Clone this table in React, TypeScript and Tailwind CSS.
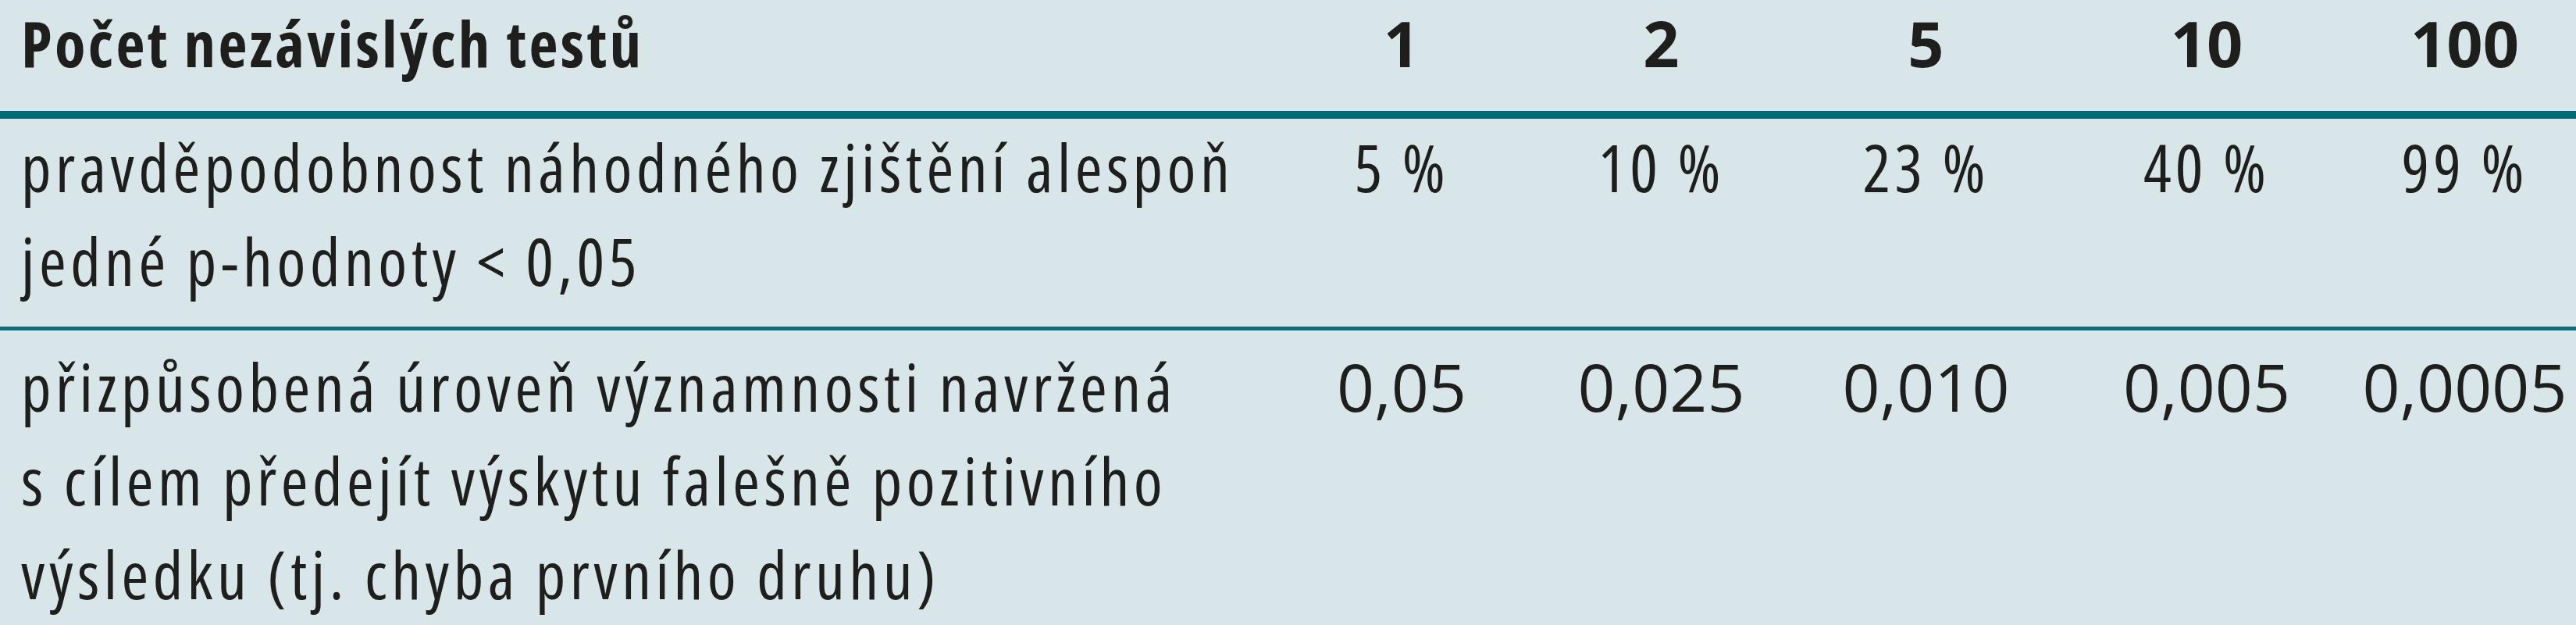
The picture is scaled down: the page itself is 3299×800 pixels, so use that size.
import React from "react";

const cols = "grid grid-cols-[1630px_330px_335px_343px_376px_285px]";

const headers = ["1", "2", "5", "10", "100"];
const chance = ["5 %", "10 %", "23 %", "40 %", "99 %"];
const levels = ["0,05", "0,025", "0,010", "0,005", "0,0005"];

export default function App() {
  return (
    <div className="w-[3299px] h-[800px] overflow-hidden bg-[#d9e6e9] text-[#1e1e1c] font-['Open_Sans',sans-serif]">
      {/* header */}
      <div className={`${cols} h-[152px] border-b-[10px] border-[#006b73]`}>
        <div className="pl-[27px] text-[81px] font-bold leading-[110px] tracking-[3.3px] whitespace-nowrap [font-stretch:75%]">
          Počet nezávislých testů
        </div>
        {headers.map((h) => (
          <div
            key={h}
            className="text-center text-[81px] font-bold leading-[110px]"
          >
            {h}
          </div>
        ))}
      </div>

      {/* probability row */}
      <div className={`${cols} pt-[2px] pb-[24px] border-b-[5px] border-[#136c75]`}>
        <div className="pl-[27px] text-[84px] leading-[120px] tracking-[5.5px] whitespace-nowrap [font-stretch:75%]">
          pravděpodobnost náhodného zjištění alespoň
          <br />
          jedné p-hodnoty &lt; 0,05
        </div>
        {chance.map((c) => (
          <div
            key={c}
            className="text-center text-[84px] leading-[120px] tracking-[5px] whitespace-nowrap [font-stretch:75%]"
          >
            {c}
          </div>
        ))}
      </div>

      {/* adjusted significance row */}
      <div className={`${cols} pt-[12px]`}>
        <div className="pl-[27px] text-[84px] leading-[120px] tracking-[5.5px] whitespace-nowrap [font-stretch:75%]">
          přizpůsobená úroveň významnosti navržená
          <br />
          s cílem předejít výskytu falešně pozitivního
          <br />
          výsledku (tj. chyba prvního druhu)
        </div>
        {levels.map((l) => (
          <div
            key={l}
            className="text-center text-[84px] leading-[120px] whitespace-nowrap"
          >
            {l}
          </div>
        ))}
      </div>
    </div>
  );
}
